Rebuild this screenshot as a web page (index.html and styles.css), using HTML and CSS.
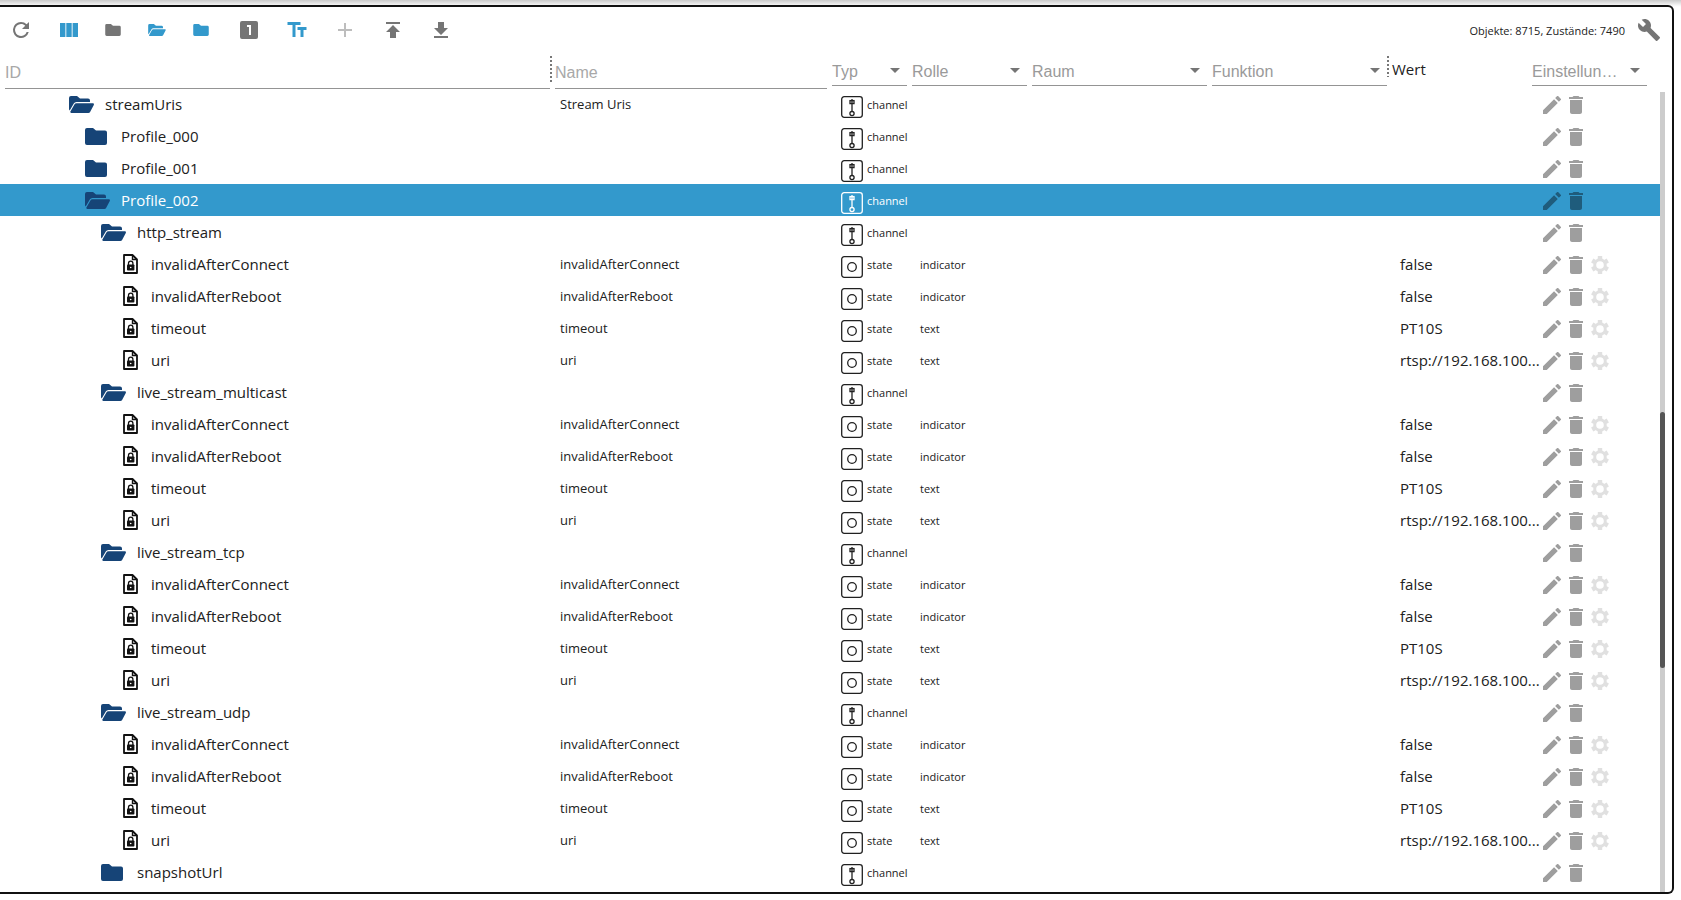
FILE: index.html
```
<!DOCTYPE html>
<html lang="de">
<head>
<meta charset="utf-8">
<title>Objekte</title>
<link rel="stylesheet" href="styles.css">
</head>
<body>
<svg class="sprite" aria-hidden="true">
  <symbol id="i-folder" viewBox="0 0 22 17"><path d="M2 0h6l3 2.600h9a2 2 0 0 1 2 2V15a2 2 0 0 1-2 2H2a2 2 0 0 1-2-2V2a2 2 0 0 1 2-2z"/></symbol>
  <symbol id="i-open" viewBox="0 0 25 17"><path d="M2 0h6l3 2.500h8a2 2 0 0 1 2 2V6H7.500a3 3 0 0 0-2.700 1.600L.7 14.500A2 2 0 0 1 0 13V2a2 2 0 0 1 2-2z"/><path d="M7.500 7.300h16.300c.9 0 1.400.9 1 1.600l-3.700 7A2 2 0 0 1 19.400 17H2.300c-.9 0-1.300-.8-.9-1.500l4-7a2.400 2.400 0 0 1 2.100-1.200z"/></symbol>
  <symbol id="i-file" viewBox="0 0 15 20"><path fill="none" stroke="currentColor" stroke-width="1.800" stroke-linejoin="round" d="M1 1h8.500L14 5.500V19H1z"/><path fill="none" stroke="currentColor" stroke-width="1.400" d="M9.500 1v4.500H14"/><rect x="4" y="10.500" width="7.400" height="6" rx=".8"/><path fill="none" stroke="currentColor" stroke-width="1.300" d="M5.500 11V9.300a2.200 2.200 0 0 1 4.400 0V11"/><circle cx="7.700" cy="13.500" r=".8" fill="#fff"/></symbol>
  <symbol id="i-channel" viewBox="0 0 22 22"><g fill="none" stroke="currentColor" stroke-width="1.300"><rect x=".7" y=".7" width="20.600" height="20.600" rx="2.500"/><path d="M11 3v12.500"/><rect class="knob" x="9" y="4.600" width="4" height="3"/><circle cx="11" cy="17.600" r="2.100"/></g></symbol>
  <symbol id="i-state" viewBox="0 0 22 22"><g fill="none" stroke="currentColor" stroke-width="1.300"><rect x=".7" y=".7" width="20.600" height="20.600" rx="2.500"/><circle cx="11" cy="11" r="4.300"/></g></symbol>
  <symbol id="i-edit" viewBox="3 3 18 18"><path d="M3 17.250V21h3.750L17.810 9.940l-3.750-3.750L3 17.250zM20.710 7.040a1 1 0 0 0 0-1.410l-2.340-2.340a1 1 0 0 0-1.410 0l-1.830 1.830 3.750 3.750 1.830-1.830z"/></symbol>
  <symbol id="i-delete" viewBox="5 3 14 18"><path d="M6 19c0 1.100.9 2 2 2h8c1.100 0 2-.9 2-2V7H6v12zM19 4h-3.500l-1-1h-5l-1 1H5v2h14V4z"/></symbol>
  <symbol id="i-gear" viewBox="0 0 18 18"><circle cx="9" cy="9" r="5.300" fill="none" stroke="currentColor" stroke-width="3"/><path fill="none" stroke="currentColor" stroke-width="4.400" d="M9 0v3M9 15v3M1.200 4.500l2.600 1.500M14.200 12l2.600 1.500M1.200 13.500L3.800 12M14.200 6l2.600-1.500"/></symbol>
</svg>
<main class="panel">
  <div class="toolbar" role="toolbar" aria-label="Objekte">
    <button class="tool" type="button" aria-label="Aktualisieren"><svg class="icon24" viewBox="0 0 24 24"><path d="M17.650 6.350A7.960 7.960 0 0 0 12 4a8 8 0 1 0 7.730 10h-2.080A6 6 0 1 1 12 6c1.660 0 3.140.69 4.220 1.780L13 11h7V4l-2.350 2.350z"/></svg></button>
    <button class="tool active" type="button" aria-label="Spalten"><svg class="icon24" viewBox="0 0 24 24"><path d="M3 5h5.400v14H3zM9.300 5h5.400v14H9.300zM15.600 5H21v14h-5.400z"/></svg></button>
    <button class="tool small" type="button" aria-label="Alle zuklappen"><svg class="icon-folder"><use href="#i-folder"/></svg></button>
    <button class="tool small active" type="button" aria-label="Alle aufklappen"><svg class="icon-folder-open"><use href="#i-open"/></svg></button>
    <button class="tool small active" type="button" aria-label="Eine Ebene zuklappen"><svg class="icon-folder"><use href="#i-folder"/></svg></button>
    <button class="tool" type="button" aria-label="Ebene 1"><svg class="icon24" viewBox="0 0 24 24"><path d="M19 3H5a2 2 0 0 0-2 2v14a2 2 0 0 0 2 2h14a2 2 0 0 0 2-2V5a2 2 0 0 0-2-2zm-5 14h-2V9h-2V7h4v10z"/></svg></button>
    <button class="tool active" type="button" aria-label="Namen anzeigen"><svg class="icon24" viewBox="0 0 24 24"><path d="M2.500 4v3h5v12h3V7h5V4h-13zm19 5h-9v3h3v7h3v-7h3V9z"/></svg></button>
    <button class="tool muted" type="button" aria-label="Hinzufügen"><svg class="icon24" viewBox="0 0 24 24"><path d="M19 13h-6v6h-2v-6H5v-2h6V5h2v6h6v2z"/></svg></button>
    <button class="tool" type="button" aria-label="Hochladen"><svg class="icon24" viewBox="0 0 24 24"><path d="M5 4v2h14V4H5zm0 10h4v6h6v-6h4l-7-7-7 7z"/></svg></button>
    <button class="tool" type="button" aria-label="Herunterladen"><svg class="icon24" viewBox="0 0 24 24"><path d="M19 10h-4V4H9v6H5l7 7 7-7zM5 18v2h14v-2H5z"/></svg></button>
    <span class="stats">Objekte: 8715, Zustände: 7490</span>
    <button class="wrench" type="button" aria-label="Anpassen"><svg class="icon24" viewBox="0 0 24 24"><path d="M22.700 19l-9.100-9.100c.9-2.300.4-5-1.500-6.900-2-2-5-2.400-7.400-1.300L9 6 6 9 1.600 4.700C.4 7.100.9 10.100 2.900 12.100c1.900 1.900 4.600 2.400 6.900 1.500l9.100 9.100c.4.4 1 .4 1.400 0l2.300-2.300c.5-.4.5-1.100.1-1.400z"/></svg></button>
  </div>
  <div class="browser">
    <table class="objects">
      <colgroup><col><col class="c-name"><col class="c-type"><col class="c-role"><col class="c-room"><col class="c-func"><col class="c-value"><col class="c-actions"></colgroup>
      <thead>
        <tr>
          <th class="h-id"><input class="filter" type="text" placeholder="ID" aria-label="ID"></th>
          <th class="h-name"><input class="filter" type="text" placeholder="Name" aria-label="Name"></th>
          <th><div class="pick"><select aria-label="Typ"><option>Typ</option></select></div></th>
          <th><div class="pick"><select aria-label="Rolle"><option>Rolle</option></select></div></th>
          <th><div class="pick"><select aria-label="Raum"><option>Raum</option></select></div></th>
          <th class="h-func"><div class="pick"><select aria-label="Funktion"><option>Funktion</option></select></div></th>
          <th class="h-value"><span class="value-title">Wert</span></th>
          <th class="h-actions"><div class="pick"><select aria-label="Einstellungen"><option>Einstellungen</option></select></div></th>
        </tr>
      </thead>
      <tbody id="rows"></tbody>
    </table>
    <div class="track"><div class="thumb"></div></div>
  </div>
</main>
<script src="tree.js"></script>
</body>
</html>
```
FILE: styles.css
```
* { box-sizing: border-box; }
body {
  margin: 0;
  padding: 5px 7px 7px 0;
  background: linear-gradient(#cacaca, #f4f4f4 5px, #fff 7px);
  font-family: "Open Sans", "Noto Sans", sans-serif;
  color: #212121;
}
.sprite { display: none; }
svg { display: block; fill: currentColor; overflow: visible; }
button { border: 0; background: none; padding: 0; color: inherit; cursor: pointer; }
.panel {
  border: 2px solid #111;
  border-left: 0;
  border-radius: 0 6px 6px 0;
  background: #fff;
}
.toolbar { display: flex; align-items: center; height: 46px; padding-right: 11px; color: #757575; }
.tool { display: flex; flex: none; justify-content: center; align-items: center; width: 48px; height: 46px; }
.tool:first-child { width: 45px; padding-right: 3px; }
.tool.small { width: 44px; padding-right: 4px; }
.tool.active { color: #3399cc; }
.tool.muted { color: #bdbdbd; }
.icon24 { width: 24px; height: 24px; }
.icon-folder { width: 16px; height: 12px; }
.icon-folder-open { width: 18px; height: 12px; }
.stats { margin-left: auto; font-size: 11px; color: #212121; }
.wrench { margin-left: 12px; }
.browser { display: flex; align-items: stretch; padding-right: 7px; }
.objects { flex: 1; width: 100%; min-width: 0; table-layout: fixed; border-collapse: collapse; margin-bottom: 4px; }
.c-name { width: 277px; }
.c-type { width: 80px; }
.c-role { width: 120px; }
.c-room { width: 180px; }
.c-func { width: 177px; }
.c-value { width: 151px; }
.c-actions { width: 120px; }
th { height: 35px; padding: 0 5px 0 0; vertical-align: top; text-align: left; font-weight: 400; }
.h-id { padding-left: 5px; }
.h-id, .h-func {
  background: repeating-linear-gradient(#777 0 2px, transparent 2px 4px) right 3px top 3px / 2px 28px no-repeat;
}
.h-func { padding-right: 2px; background-position: right 0 top 3px; background-size: 2px 21px; }
.filter {
  display: block;
  width: 100%;
  height: 36px;
  margin-bottom: -1px;
  padding: 4px 0 0;
  border: 0;
  border-bottom: 1px solid #949494;
  background: none;
  font: 16px "Liberation Sans", Arial, sans-serif;
}
.filter::placeholder { color: #a8a8a8; opacity: 1; }
.pick { position: relative; height: 33px; border-bottom: 1px solid #949494; }
.pick::after {
  content: "";
  position: absolute;
  right: 7px;
  top: 15px;
  border: 5px solid transparent;
  border-top-color: #757575;
  border-bottom: 0;
  pointer-events: none;
}
.pick select {
  appearance: none;
  width: 100%;
  height: 32px;
  padding: 4px 24px 0 0;
  border: 0;
  background: none;
  color: #9a9a9a;
  font: 16px "Liberation Sans", Arial, sans-serif;
  text-overflow: ellipsis;
}
.h-value { padding-left: 3px; }
.value-title { display: block; font-size: 15px; line-height: 33px; }
.h-actions { padding-right: 13px; }
.h-actions .pick { margin-left: -8px; }
td { height: 32px; padding: 0; font-size: 13px; line-height: 31px; white-space: nowrap; }
.node { display: flex; align-items: center; height: 32px; font-size: 15px; }
.lvl0 { padding-left: 69px; }
.lvl1 { padding-left: 85px; }
.lvl2 { padding-left: 101px; }
.lvl3 { padding-left: 117px; }
.glyph { display: flex; flex: none; width: 26px; margin-right: 10px; color: #164477; }
.glyph.file { justify-content: center; margin-right: 8px; color: #111; }
.glyph.folder svg { width: 22px; height: 17px; }
.glyph.open svg { width: 25px; height: 17px; }
.glyph.file svg { width: 15px; height: 20px; }
.name { padding-left: 5px; }
.kind { display: flex; align-items: center; height: 32px; padding-left: 9px; font-size: 11px; }
.kind svg { width: 22px; height: 22px; margin: 5px 4px 0 0; }
.role { padding-left: 8px; font-size: 11px; }
.value { padding-left: 11px; font-size: 15px; }
.acts { display: flex; align-items: center; gap: 8px; height: 32px; padding: 2px 0 0 3px; color: #9e9e9e; }
.acts svg { width: 18px; height: 18px; }
.acts .bin svg { width: 14px; }
.acts .gear { color: #e0e0e0; }
.selected { background: #3399cc; color: #fff; }
.selected .acts { color: #1f5c7c; }
.selected .knob { fill: currentColor; }
.track { flex: none; width: 5px; margin-top: 39px; background: #ccc; }
.thumb { position: relative; top: 40%; height: 32%; border-radius: 3px; background: #555; }
```
FILE: tree.js
```
const states = [
  ["invalidAfterConnect", "indicator", "false"],
  ["invalidAfterReboot", "indicator", "false"],
  ["timeout", "text", "PT10S"],
  ["uri", "text", "rtsp://192.168.100..."]
];

const rows = [
  { id: "streamUris", name: "Stream Uris", level: 0, icon: "open" },
  { id: "Profile_000", level: 1, icon: "folder" },
  { id: "Profile_001", level: 1, icon: "folder" },
  { id: "Profile_002", level: 1, icon: "open", selected: true }
];
for (const id of ["http_stream", "live_stream_multicast", "live_stream_tcp", "live_stream_udp"]) {
  rows.push({ id, level: 2, icon: "open" });
  for (const [name, role, value] of states) {
    rows.push({ id: name, name, role, value, level: 3, icon: "file" });
  }
}
rows.push({ id: "snapshotUrl", level: 2, icon: "folder" });

const use = (id) => `<svg><use href="#i-${id}"/></svg>`;
const button = (cls, label, icon) =>
  `<button type="button" class="${cls}" aria-label="${label}">${use(icon)}</button>`;

document.getElementById("rows").innerHTML = rows.map((r) => {
  const kind = r.icon === "file" ? "state" : "channel";
  return `<tr${r.selected ? ' class="selected"' : ""}>
    <td><div class="node lvl${r.level}"><span class="glyph ${r.icon}">${use(r.icon)}</span>${r.id}</div></td>
    <td class="name">${r.name || ""}</td>
    <td><div class="kind">${use(kind)}${kind}</div></td>
    <td class="role">${r.role || ""}</td>
    <td></td>
    <td></td>
    <td class="value">${r.value || ""}</td>
    <td><div class="acts">${button("pen", "Bearbeiten", "edit")}${button("bin", "Löschen", "delete")}${
      kind === "state" ? button("gear", "Einstellungen", "gear") : ""}</div></td>
  </tr>`;
}).join("");
```
